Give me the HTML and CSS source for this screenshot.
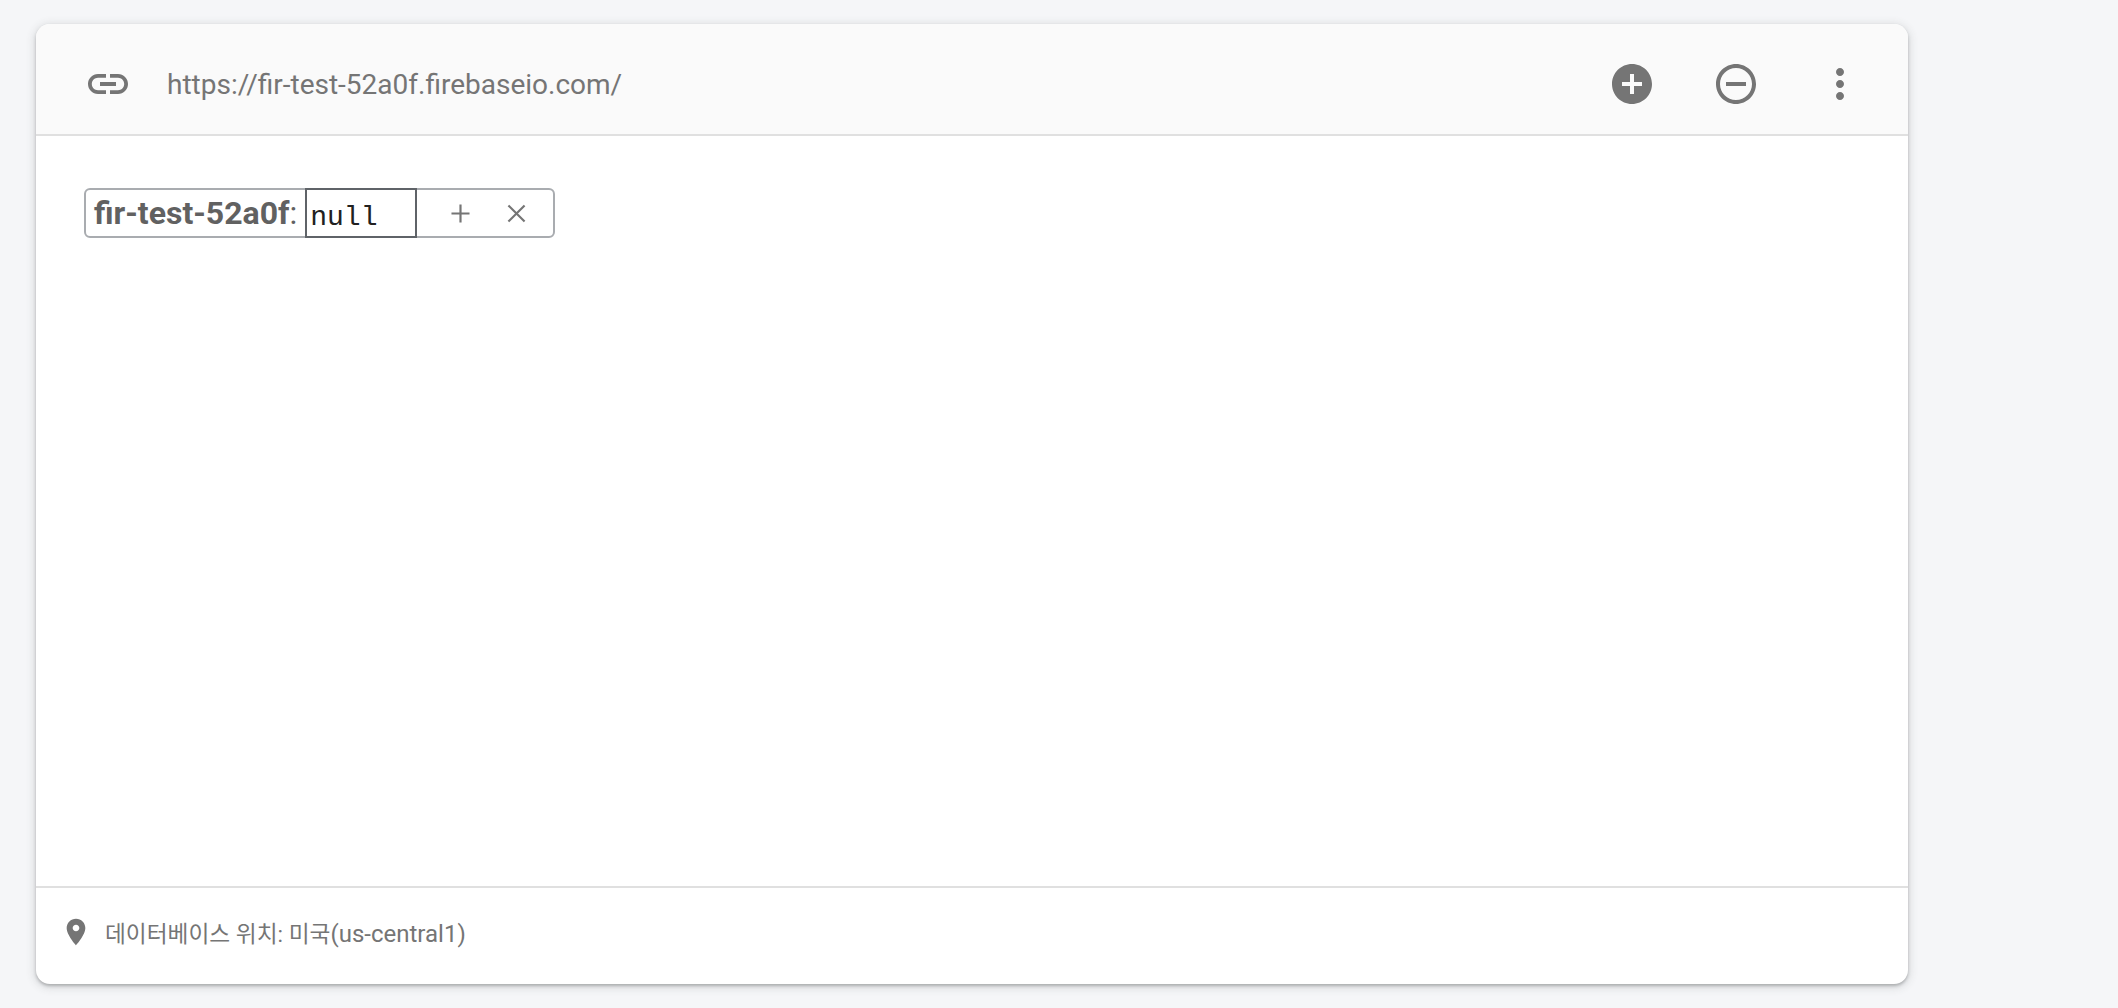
FILE: index.html
```html
<!DOCTYPE html>
<html lang="ko">
<head>
    <meta charset="UTF-8">
    <title>Realtime Database</title>
    <link rel="stylesheet" href="styles.css">
</head>
<body>
    <div class="db-card">
        <div class="db-header">
            <svg class="link-icon" viewBox="0 0 24 24"><path d="M3.9 12c0-1.71 1.39-3.1 3.1-3.1h4V7H7c-2.76 0-5 2.24-5 5s2.24 5 5 5h4v-1.9H7c-1.71 0-3.1-1.39-3.1-3.1zM8 13h8v-2H8v2zm9-6h-4v1.9h4c1.71 0 3.1 1.39 3.1 3.1s-1.39 3.1-3.1 3.1h-4V17h4c2.76 0 5-2.24 5-5s-2.24-5-5-5z"/></svg>
            <span class="db-url">https://fir-test-52a0f.firebaseio.com/</span>
            <div class="header-actions">
                <svg class="action-icon" viewBox="0 0 24 24"><path d="M12 2C6.48 2 2 6.48 2 12s4.48 10 10 10 10-4.48 10-10S17.52 2 12 2zm5 11h-4v4h-2v-4H7v-2h4V7h2v4h4v2z"/></svg>
                <svg class="action-icon" viewBox="0 0 24 24"><path d="M7 11v2h10v-2H7zm5-9C6.48 2 2 6.48 2 12s4.48 10 10 10 10-4.48 10-10S17.52 2 12 2zm0 18c-4.41 0-8-3.59-8-8s3.59-8 8-8 8 3.59 8 8-3.59 8-8 8z"/></svg>
                <svg class="action-icon" viewBox="0 0 24 24"><path d="M12 8c1.1 0 2-.9 2-2s-.9-2-2-2-2 .9-2 2 .9 2 2 2zm0 2c-1.1 0-2 .9-2 2s.9 2 2 2 2-.9 2-2-.9-2-2-2zm0 6c-1.1 0-2 .9-2 2s.9 2 2 2 2-.9 2-2-.9-2-2-2z"/></svg>
            </div>
        </div>

        <div class="db-tree">
            <div class="tree-node">
                <span class="node-key"><b>fir-test-52a0f</b>:</span>
                <input class="node-value" type="text" value="null">
                <div class="node-buttons">
                    <svg class="node-icon" viewBox="0 0 20 20"><path d="M.5 10h19M10 .5v19"/></svg>
                    <svg class="node-icon" viewBox="0 0 20 20"><path d="M1.5 1.5l17 17M18.5 1.5l-17 17"/></svg>
                </div>
            </div>
        </div>

        <div class="db-footer">
            <svg class="pin-icon" viewBox="0 0 24 24"><path d="M12 2C8.13 2 5 5.13 5 9c0 5.25 7 13 7 13s7-7.75 7-13c0-3.87-3.13-7-7-7zm0 9.5c-1.38 0-2.5-1.12-2.5-2.5s1.12-2.5 2.5-2.5 2.5 1.12 2.5 2.5-1.12 2.5-2.5 2.5z"/></svg>
            <span class="db-location"><span class="location-ko">데이터베이스 위치: 미국</span>(us-central1)</span>
        </div>
    </div>
</body>
</html>
```

FILE: styles.css
```css
body {
    background-color: #f5f6f8;
    color: #757575;
    font-family: Roboto, "Noto Sans CJK KR", sans-serif;
    margin: 0;
    padding: 24px 210px 24px 36px;
    height: 1008px;
    box-sizing: border-box;
    overflow: hidden;
}

.db-card {
    height: 960px;
    display: flex;
    flex-direction: column;
    background-color: #fff;
    border-radius: 14px;
    box-shadow: 0 2px 3px rgba(60, 64, 67, 0.3), 0 2px 8px 2px rgba(60, 64, 67, 0.15);
    overflow: hidden;
}

.db-header {
    height: 112px;
    box-sizing: border-box;
    flex: none;
    display: flex;
    align-items: center;
    padding: 10px 44px 0 48px;
    background-color: #fafafa;
    border-bottom: 2px solid #e0e0e0;
}

.link-icon {
    width: 48px;
    height: 48px;
    fill: #757575;
    flex: none;
}

.db-url {
    margin-left: 35px;
    font-size: 28px;
}

.header-actions {
    margin-left: auto;
    display: flex;
    gap: 56px;
}

.action-icon {
    width: 48px;
    height: 48px;
    fill: #757575;
}

.db-tree {
    flex: 1;
    padding: 52px 48px;
}

.tree-node {
    display: inline-flex;
    align-items: stretch;
    height: 50px;
    box-sizing: border-box;
    border: 2px solid #a9acb0;
    border-radius: 6px;
}

.node-key {
    display: flex;
    align-items: center;
    padding: 0 8px;
    color: #616161;
    font-size: 32px;
}

.node-value {
    width: 112px;
    margin: -2px 0;
    padding: 8px 3px 0;
    box-sizing: border-box;
    border: 2px solid #5f6368;
    border-radius: 0;
    outline: none;
    font-family: "Liberation Mono", monospace;
    font-size: 28px;
    color: #212121;
}

.node-buttons {
    display: flex;
    align-items: center;
    gap: 37px;
    padding: 0 27px 0 34px;
}

.node-icon {
    width: 19px;
    height: 19px;
    fill: none;
    stroke: #757575;
    stroke-width: 2.3;
}

.db-footer {
    height: 98px;
    box-sizing: border-box;
    flex: none;
    display: flex;
    align-items: center;
    padding: 0 0 8px 24px;
    border-top: 2px solid #e0e0e0;
}

.pin-icon {
    width: 32px;
    height: 32px;
    fill: #757575;
    flex: none;
}

.db-location {
    margin-left: 13px;
    font-size: 24px;
}

.location-ko {
    font-size: 22.7px;
}
```
